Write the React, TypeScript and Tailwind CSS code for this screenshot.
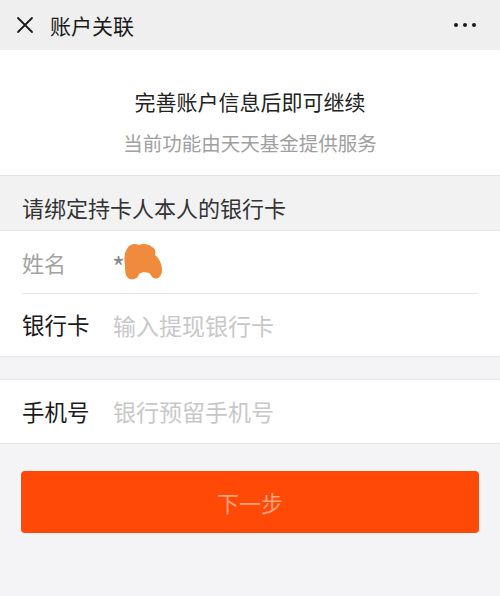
import { useState } from "react";

const cjk = { fontFamily: '"Noto Sans CJK SC", "Noto Sans", sans-serif' };

const App = () => {
  const [card, setCard] = useState("");
  const [phone, setPhone] = useState("");

  return (
    <div className="min-h-[596px] w-[500px] bg-[#f4f4f6]" style={cjk}>
      {/* Top bar */}
      <div className="flex h-[50px] items-center bg-[#efefef] pl-[15px] pr-[24px]">
        <svg width="20" height="20" viewBox="0 0 20 20" className="text-[#1a1a1a]">
          <path d="M3 3 L17 17 M17 3 L3 17" stroke="currentColor" strokeWidth="1.8" strokeLinecap="round" />
        </svg>
        <span className="ml-[15px] text-[21px] leading-none text-[#1a1a1a]">账户关联</span>
        <div className="ml-auto flex items-center gap-[5px]">
          <span className="h-[4px] w-[4px] rounded-full bg-[#1a1a1a]" />
          <span className="h-[4px] w-[4px] rounded-full bg-[#1a1a1a]" />
          <span className="h-[4px] w-[4px] rounded-full bg-[#1a1a1a]" />
        </div>
      </div>

      {/* Intro */}
      <div className="flex h-[125px] flex-col items-center bg-white pt-[38px]">
        <p className="text-[21px] leading-[26px] text-[#222]">完善账户信息后即可继续</p>
        <p className="mt-[16px] text-[19.5px] leading-[26px] text-[#a0a0a0]">当前功能由天天基金提供服务</p>
      </div>

      {/* Section label */}
      <div className="flex h-[56px] items-center border-y border-[#e3e3e3] bg-[#f2f2f3] px-[22px] pt-[8px]">
        <span className="text-[22px] leading-none text-[#333]">请绑定持卡人本人的银行卡</span>
      </div>

      {/* Name + card */}
      <div className="border-b border-[#e3e3e3] bg-white">
        <div className="mx-[22px] flex h-[63px] items-center border-b border-[#e6e6e6]">
          <span className="w-[90px] text-[22px] text-[#a3a3a3]">姓名</span>
          <span className="flex h-[38px] items-start">
            <span className="mt-[9px] text-[28px] leading-none text-[#8a8a8a]">*</span>
            <svg width="40" height="38" viewBox="0 0 40 38" className="-ml-[1px]">
              <path
                d="M3 6 C5 1 11 0 15 2 C19 0 25 1 28 4 C31 5 32 9 31 12 C35 15 38 21 38 27 C38 33 34 37 30 35 C27 34 27 31 25 30 C22 29 17 29 15 31 C14 36 8 38 4 35 C1 32 1 27 1 22 C0 17 0 10 3 6 Z"
                fill="#f08a3c"
              />
            </svg>
          </span>
        </div>
        <div className="mx-[22px] flex h-[62px] items-center">
          <span className="w-[91px] text-[22.5px] text-[#1a1a1a]">银行卡</span>
          <input
            value={card}
            onChange={(e) => setCard(e.target.value)}
            placeholder="输入提现银行卡"
            className="flex-1 bg-transparent text-[23px] text-[#1a1a1a] outline-none placeholder:text-[#c8c8c8]"
          />
        </div>
      </div>

      {/* Phone */}
      <div className="mt-[22px] flex h-[65px] items-center border-y border-[#e3e3e3] bg-white px-[22px]">
        <span className="w-[91px] text-[22.5px] text-[#1a1a1a]">手机号</span>
        <input
          value={phone}
          onChange={(e) => setPhone(e.target.value)}
          placeholder="银行预留手机号"
          className="flex-1 bg-transparent text-[23px] text-[#1a1a1a] outline-none placeholder:text-[#c8c8c8]"
        />
      </div>

      {/* Next */}
      <div className="px-[21px] pt-[27px]">
        <button className="flex h-[62px] w-full items-center justify-center rounded-[4px] bg-[#fe4a06] text-[22px] text-[#ffa47c]">
          下一步
        </button>
      </div>
    </div>
  );
};

export default App;
